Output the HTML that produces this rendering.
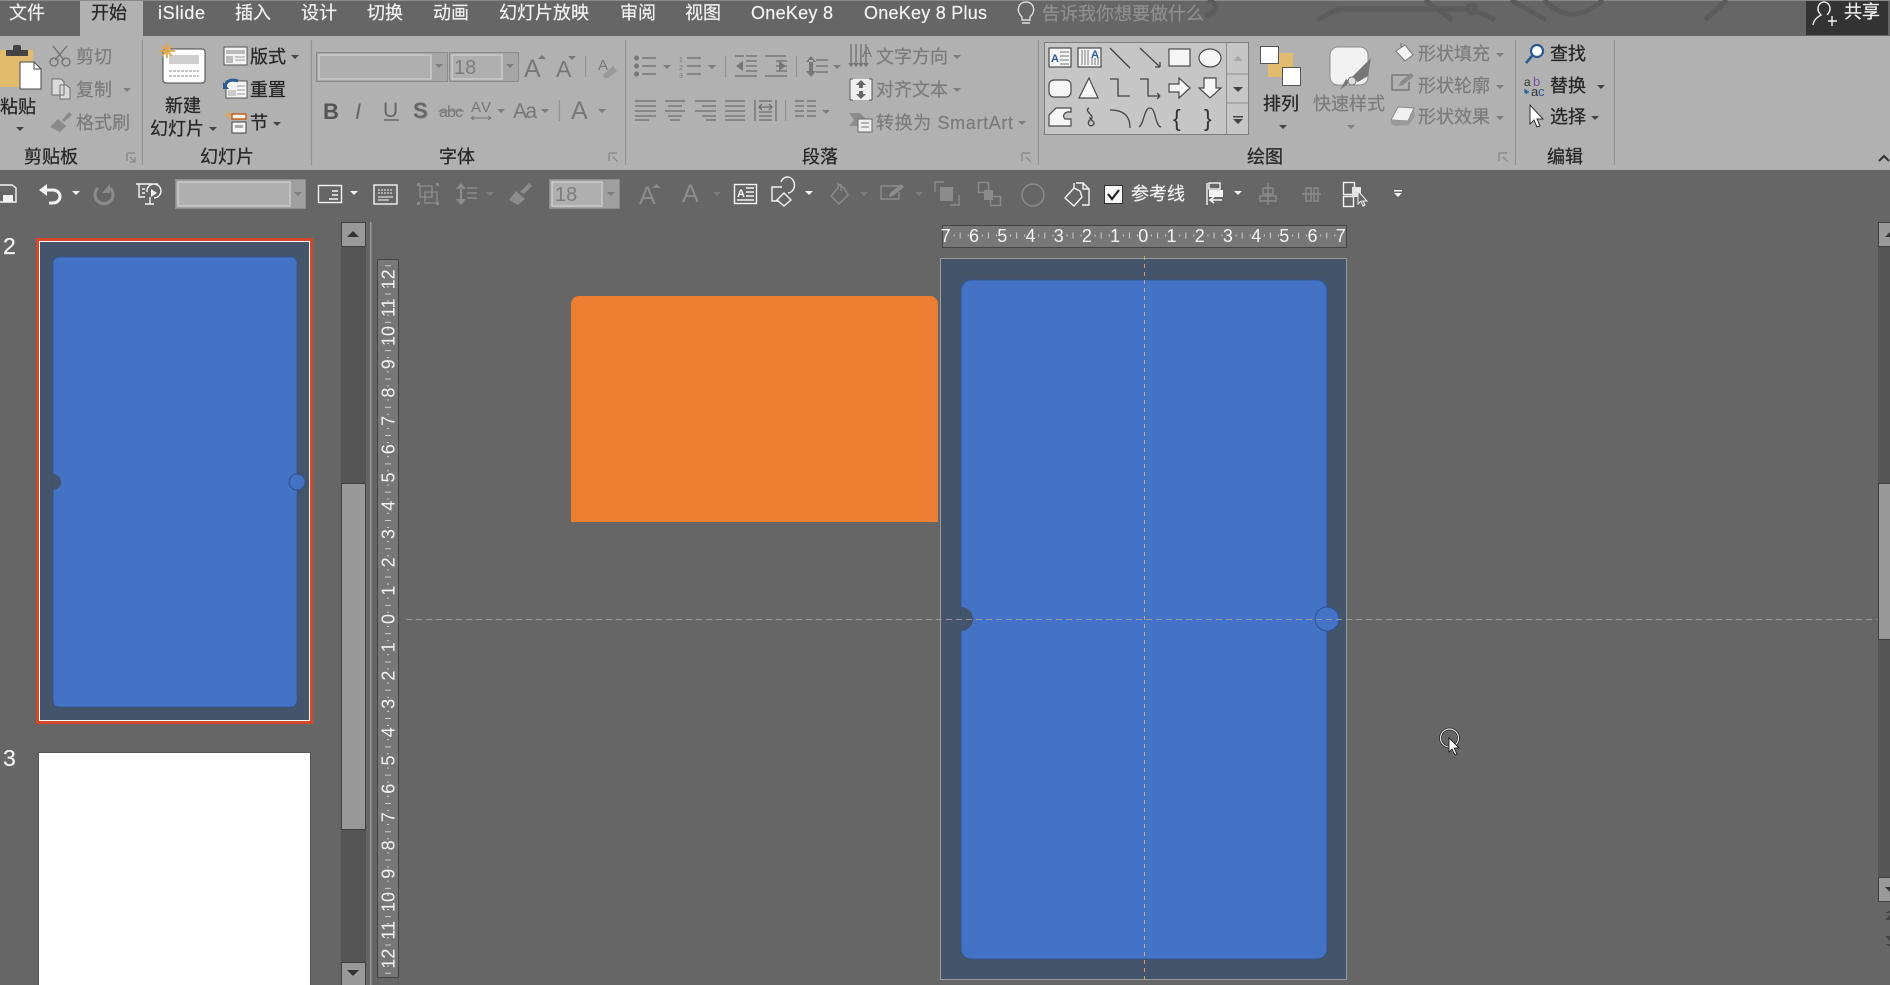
<!DOCTYPE html>
<html lang="zh"><head><meta charset="utf-8"><title>PowerPoint</title>
<style>
html,body{margin:0;padding:0;width:1890px;height:985px;overflow:hidden;background:#666}
svg{display:block}
text{font-family:"Liberation Sans","Noto Sans CJK SC",sans-serif;font-size:18px}
.w{fill:#f2f2f2;stroke:#f2f2f2;stroke-width:.2}.k{fill:#262626;stroke:#262626;stroke-width:.25}.g{fill:#7b7b7b;stroke:#7b7b7b;stroke-width:.2}
.rn{font-size:19px;fill:#f4f4f4;text-anchor:middle}
.ln{fill:none;stroke:#6e6e6e;stroke-width:1.3}
.lk{fill:none;stroke:#444;stroke-width:1.3}
.lw{fill:none;stroke:#f4f4f4;stroke-width:1.4}
.lg{fill:none;stroke:#8c8c8c;stroke-width:1.4}
.sh{fill:#f6f6f6;stroke:#4a4a4a;stroke-width:1.2}
</style></head><body>
<svg width="1890" height="985" viewBox="0 0 1890 985" xmlns="http://www.w3.org/2000/svg">
<rect width="1890" height="985" fill="#666"/>
<rect width="1890" height="1" fill="#8a8a8a"/>
<!-- title decoration -->
<g fill="none" stroke="#5c5c5c" stroke-width="5">
<path d="M1317 20L1338 9H1470M1425 0L1452 20M1472 9L1495 20M1511 0L1546 20M1544 0Q1572 28 1603 0M1727 0L1705 20M1208 0Q1226 8 1205 16"/>
<circle cx="1472" cy="9" r="4"/>
</g>
<!-- ribbon -->
<rect x="0" y="36" width="1890" height="134" fill="#b1b1b1"/>
<rect x="80" y="1" width="63" height="36" fill="#b1b1b1"/>
<rect x="1806" y="1" width="82" height="34" fill="#333"/>
<!-- tabs -->
<g class="w">
<text x="9" y="19">文件</text>
<text x="91" y="19" class="k">开始</text>
<text x="158" y="19" textLength="47">iSlide</text>
<text x="235" y="19">插入</text><text x="301" y="19">设计</text><text x="367" y="19">切换</text><text x="433" y="19">动画</text>
<text x="499" y="19">幻灯片放映</text><text x="620" y="19">审阅</text><text x="685" y="19">视图</text>
<text x="751" y="19" textLength="82">OneKey 8</text><text x="864" y="19" textLength="123">OneKey 8 Plus</text>
<text x="1042" y="20" style="fill:#8f8f8f;stroke:#8f8f8f">告诉我你想要做什么</text>
<text x="1844" y="18">共享</text>
</g>
<path class="lw" d="M1022 17c-7-7-3-15 4-15s11 8 4 15v3h-8zM1022 23h8" style="stroke:#ddd"/>
<path class="lw" d="M1813 25c1-6 5-8 8-10c-6-6-2-13 3-13s9 7 3 13M1828 21h9M1832 16v10" />
<!-- separators -->
<g stroke="#939393" stroke-width="1.2">
<path d="M142.5 40V165M311.5 40V165M625.5 40V165M1038.5 40V165M1515.5 40V165M1614.5 40V165"/>
<path d="M585.5 56V77M559.5 100V121M725.5 56V77M796.5 56V77M785.5 100V121"/>
</g>
<!-- labels -->
<g class="k">
<text x="24" y="163">剪贴板</text><text x="200" y="163">幻灯片</text><text x="439" y="163">字体</text><text x="802" y="163">段落</text><text x="1247" y="163">绘图</text><text x="1547" y="163">编辑</text>
</g>
<g class="lg" stroke-width="1"><path d="M127 153h8M127 153v8M135 162l-5-5M135 157v5h-5M609 153h8M609 153v8M618 162l-5-5M1022 153h8M1022 153v8M1031 162l-5-5M1499 153h8M1499 153v8M1508 162l-5-5"/></g>
<!-- paste -->
<rect x="0" y="50" width="33" height="37" fill="#e2bb6e"/>
<rect x="6" y="50" width="22" height="6" fill="#444"/><rect x="13" y="45" width="8" height="7" rx="2" fill="#444"/>
<path d="M20 62h14l7 7v20H20z" fill="#fff" stroke="#4a4a4a"/><path d="M34 62v7h7" fill="none" stroke="#4a4a4a"/>
<text x="0" y="113" class="k">粘贴</text>
<path d="M16 127h8l-4 4z" fill="#444"/>
<!-- scissors etc -->
<path class="ln" d="M53 46l11 14M67 46l-12 14" stroke-width="2"/><circle class="ln" cx="54" cy="62" r="4"/><circle class="ln" cx="66" cy="62" r="4"/>
<text x="76" y="63" class="g">剪切</text>
<path d="M52 79h9l3 3v13H52z M60 85h6l4 3v11H60z" fill="#dadada" stroke="#6e6e6e"/>
<text x="76" y="96" class="g">复制</text><path d="M123 88h8l-4 4z" fill="#808080"/>
<path d="M62 120l7-8 3 3-8 7zM58 119l8 7-6 6-10-5z" fill="#8a8a8a"/>
<text x="76" y="129" class="g">格式刷</text>
<!-- new slide -->
<rect x="163" y="49" width="42" height="34" rx="3" fill="#fff" stroke="#444"/>
<rect x="169" y="55" width="30" height="9" fill="#cfcfcf"/>
<path d="M169 71h30M169 76h30" stroke="#888" stroke-dasharray="3 1"/>
<path d="M167 43v15M159 51h16M162 46l10 10M172 46l-10 10" stroke="#e0a84a" stroke-width="1.8"/>
<text x="165" y="112" class="k">新建</text><text x="150" y="135" class="k">幻灯片</text><path d="M209 127h8l-4 4z" fill="#444"/>
<rect x="224" y="47" width="23" height="18" fill="#f4f4f4" stroke="#555"/><path d="M226 50h19v4h-19zM226 56h7v7h-7z" fill="#bbb"/><path d="M235 57h10M235 60h10" stroke="#999"/>
<text x="250" y="63" class="k">版式</text><path d="M291 55h8l-4 4z" fill="#444"/>
<rect x="226" y="81" width="21" height="17" fill="#f4f4f4" stroke="#555"/><path d="M228 90h8v6h-8z" fill="#ccc"/><path d="M237 86h8M237 90h8M237 94h8" stroke="#999"/>
<path d="M225 87c1-7 7-8 13-6" fill="none" stroke="#2a5a92" stroke-width="3"/><path d="M223 82v7h6z" fill="#2a5a92"/>
<text x="250" y="96" class="k">重置</text>
<path d="M229 111v8M225 115h8" stroke="#e0a84a" stroke-width="1.4"/>
<rect x="232" y="114" width="14" height="5" fill="#f4f4f4" stroke="#c55a11" stroke-width="1.4"/>
<rect x="232" y="122" width="14" height="11" fill="#f4f4f4" stroke="#444"/><path d="M235 125h8v3h-8z" fill="#aaa"/>
<text x="250" y="129" class="k">节</text><path d="M273 122h8l-4 4z" fill="#444"/>
<!-- font boxes -->
<rect x="316.5" y="52.5" width="131" height="29" fill="#a6a6a6" stroke="#8c8c8c"/>
<rect x="319" y="55" width="112" height="24" fill="#afafaf" stroke="#cdcdcd" stroke-width="1.4"/>
<path d="M435 64h8l-4 4z" fill="#7d7d7d"/>
<rect x="449.5" y="52.5" width="69" height="29" fill="#a6a6a6" stroke="#8c8c8c"/>
<rect x="452" y="55" width="50" height="24" fill="#afafaf" stroke="#cdcdcd" stroke-width="1.4"/>
<text x="454" y="74" style="font-size:20px;fill:#7d7d7d">18</text><path d="M506 64h8l-4 4z" fill="#7d7d7d"/>
<g style="fill:#777">
<text x="524" y="77" style="font-size:25px">A</text><path d="M538 59h8l-4-4z"/>
<text x="556" y="77" style="font-size:23px">A</text><path d="M568 56h8l-4 4z"/>
<text x="598" y="70" style="font-size:15px">A</text><path d="M602 76l11-10 4 5-9 7-3 0z" fill="#999"/>
<text x="323" y="119" style="font-size:22px;font-weight:bold;fill:#555">B</text>
<text x="355" y="119" style="font-size:22px;font-style:italic;fill:#666">I</text>
<text x="383" y="117" style="font-size:21px;fill:#666">U</text><path d="M384 120h15" stroke="#666" stroke-width="1.5"/>
<text x="414" y="119" style="font-size:22px;font-weight:bold;fill:#999">S</text>
<text x="413" y="118" style="font-size:22px;font-weight:bold;fill:#666">S</text>
<text x="439" y="117" style="font-size:16px" textLength="24">abc</text><path d="M438 111h26" stroke="#777"/>
<text x="471" y="112" style="font-size:15px" textLength="20">AV</text><path d="M471 118h20M471 118l3-2M471 118l3 2M491 118l-3-2M491 118l-3 2" stroke="#777"/>
<text x="513" y="118" style="font-size:21px" textLength="24">Aa</text>
<text x="571" y="119" style="font-size:25px">A</text>
</g>
<path d="M497 109h8l-4 4zM541 109h8l-4 4zM598 109h8l-4 4z" fill="#7d7d7d"/>
<!-- paragraph icons -->
<g class="ln">
<path d="M642 58h14M642 66h14M642 74h14M687 58h14M687 66h14M687 74h14"/>
<path d="M746 56h11M746 61h11M746 66h11M746 71h11M735 76h22M735 56h9M765 56h21M776 61h11M776 66h11M776 71h11M765 76h22"/>
<path d="M816 60h12M816 66h12M816 72h12"/>
<path d="M635 101h21M635 106h21M635 111h21M635 116h21M635 120h14"/>
<path d="M665 101h20M668 106h14M665 111h20M668 116h14M670 120h10"/>
<path d="M695 101h21M702 106h14M695 111h21M702 116h14M706 120h10"/>
<path d="M725 101h20M725 106h20M725 111h20M725 116h20M725 120h20"/>
<path d="M755 100v21M776 100v21M759 101h13M759 112h13M759 116h13M759 120h13M759 107h13M762 104l-3 3 3 3M769 104l3 3-3 3"/>
<path d="M795 101h9M807 101h9M795 106h9M807 106h9M795 111h9M807 111h9M795 116h9M807 116h9"/>
</g>
<path d="M634 58m0 0a2.5 2.5 0 1 0 5 0a2.5 2.5 0 1 0-5 0M634 66a2.5 2.5 0 1 0 5 0a2.5 2.5 0 1 0-5 0M634 74a2.5 2.5 0 1 0 5 0a2.5 2.5 0 1 0-5 0" fill="#777"/>
<g style="fill:#777"><text x="679" y="62" style="font-size:7px">1</text><text x="679" y="70" style="font-size:7px">2</text><text x="679" y="78" style="font-size:7px">3</text></g>
<path d="M736 66l7-5v10zM786 66l-7-5v10zM811 56l-5 6h10zM811 77l-5-6h10zM809 60h4v12h-4z" fill="#777" transform="translate(0 0)"/>
<path d="M663 65h8l-4 4zM708 65h8l-4 4zM833 65h8l-4 4zM822 110h8l-4 4z" fill="#7d7d7d"/>
<!-- text direction -->
<path class="ln" d="M851 44v22M856 44v22M861 44v22M866 44v22M849 63l2 3 2-3M854 63l2 3 2-3M859 63l2 3 2-3M864 63l2 3 2-3"/>
<text x="862" y="57" style="font-size:15px;fill:#777">A</text>
<text x="876" y="63" class="g">文字方向</text><path d="M953 55h8l-4 4z" fill="#7d7d7d"/>
<rect x="850" y="79" width="22" height="21" fill="#eee"/><path d="M850 79h3M869 79h3M850 100h3M869 100h3M850 79v21M872 79v21" stroke="#555" fill="none"/>
<path d="M861 80l-5 5h3v3h4v-3h3zM861 99l-5-5h3v-3h4v3h3z" fill="#666"/>
<text x="876" y="96" class="g">对齐文本</text><path d="M953 88h8l-4 4z" fill="#7d7d7d"/>
<path d="M849 113h11l7 7-5 6h-13l5-6z" fill="#8c8c8c"/><rect x="858" y="119" width="14" height="13" fill="#eee" stroke="#666"/><path d="M861 123h8M861 127h8" stroke="#777"/>
<text x="876" y="129" class="g" textLength="137">转换为 SmartArt</text><path d="M1018 121h8l-4 4z" fill="#7d7d7d"/>
<!-- gallery -->
<rect x="1044.5" y="42.5" width="204" height="92" fill="#c6c6c6" stroke="#7e7e7e"/>
<path d="M1226.5 42v92M1227 74h21M1227 103h21" stroke="#8c8c8c"/>
<path d="M1233 61h10l-5-5z" fill="#a8a8a8"/><path d="M1233 87h10l-5 5z" fill="#444"/><path d="M1233 116h10v1.5h-10zM1233 119h10l-5 5z" fill="#444"/>
<rect class="sh" x="1049" y="48" width="22" height="19"/><text x="1051" y="62" style="font-size:11px;font-weight:bold;fill:#2a5a92">A</text><path d="M1060 52h9M1060 56h9M1060 60h9M1060 64h9" stroke="#777"/>
<rect class="sh" x="1078" y="48" width="23" height="19"/><path d="M1082 50v15M1085 50v15M1088 50v15M1092 58v7M1095 58v7M1098 58v7" stroke="#777"/><text x="1091" y="58" style="font-size:11px;font-weight:bold;fill:#2a5a92">A</text>
<path class="lk" d="M1110 48l20 20M1140 48l20 19M1160 67v-5M1160 67h-5"/>
<rect class="sh" x="1169" y="49" width="21" height="17"/><ellipse class="sh" cx="1210" cy="58" rx="11" ry="9"/>
<rect class="sh" x="1049" y="80" width="22" height="17" rx="5"/>
<path class="sh" d="M1089 78l9 20h-19z"/>
<path class="lk" d="M1110 79h8v17h12M1140 79h8v17h12M1160 96l-3-3M1160 96l-3 3"/>
<path class="sh" d="M1169 84h10v-6l11 10-11 10v-6h-10z"/>
<path class="sh" d="M1204 78h12v10h5l-11 10-11-10h5z"/>
<path class="sh" d="M1056 108h15v4c-7-1-9 4-6 7h6v7h-22v-11z"/>
<path class="lk" d="M1089 108c-6 3 7 8 2 11c-5 3-2 9 2 6c4-3-4-5-3-8M1110 110c14 0 20 6 20 18M1139 127c5-3 5-19 11-19c6 0 5 18 11 19"/>
<text x="1173" y="126" style="font-size:23px;fill:#333">{</text><text x="1204" y="126" style="font-size:23px;fill:#333">}</text>
<!-- arrange -->
<rect x="1268" y="53" width="25" height="24" fill="#e2bb6e"/>
<rect x="1260.5" y="46.5" width="18" height="17" fill="#fff" stroke="#555"/><rect x="1282.5" y="67.5" width="18" height="18" fill="#fff" stroke="#555"/>
<text x="1263" y="110" class="k">排列</text><path d="M1279 125h8l-4 4z" fill="#444"/>
<rect x="1330" y="47" width="38" height="38" rx="8" fill="#f2f2f2" stroke="#8c8c8c"/>
<path d="M1340 90l6-11 4 3zM1351 78l20-20-3 18-10 6z" fill="#777"/><circle cx="1352" cy="81" r="4" fill="#ddd" stroke="#777"/>
<text x="1313" y="110" class="g">快速样式</text><path d="M1347 125h8l-4 4z" fill="#808080"/>
<path d="M1396 51l9-6 8 10-8 6z" fill="#f4f4f4" stroke="#777"/><path d="M1401 48v-5" stroke="#777"/>
<text x="1418" y="60" class="g">形状填充</text><path d="M1496 53h8l-4 4z" fill="#7d7d7d"/>
<path class="ln" d="M1409 75h-17v15h17v-8"/><path d="M1399 86l1-4 11-9 3 3-11 9z" fill="#8a8a8a"/>
<text x="1418" y="92" class="g">形状轮廓</text><path d="M1496 85h8l-4 4z" fill="#7d7d7d"/>
<path d="M1391 120l7-13 16 1-6 13z" fill="#f0f0f0" stroke="#888"/><path d="M1391 120l17 1 1 4-15 1-3-2zM1408 121l6-13 1 8-6 9z" fill="#9a9a9a"/>
<text x="1418" y="123" class="g">形状效果</text><path d="M1496 116h8l-4 4z" fill="#7d7d7d"/>
<!-- find -->
<circle cx="1537" cy="51" r="6" fill="#fff" stroke="#2a5a92" stroke-width="2.2"/><path d="M1532 56l-6 7" stroke="#2a5a92" stroke-width="2.6"/>
<text x="1550" y="60" class="k">查找</text>
<text x="1524" y="86" style="font-size:12px;fill:#333">a</text><text x="1533" y="86" style="font-size:13px;fill:#7a4d9e">b</text><text x="1531" y="96" style="font-size:13px;fill:#333">a</text><text x="1538" y="96" style="font-size:13px;fill:#2a5a92">c</text><path d="M1525 89v3h4M1527 90l-2 2 2 2" fill="none" stroke="#2a5a92" stroke-width="1.2"/>
<text x="1550" y="92" class="k">替换</text><path d="M1597 85h8l-4 4z" fill="#444"/>
<path d="M1530 105v19l4-4 3 7 3-1-3-7h6z" fill="#fff" stroke="#333"/>
<text x="1550" y="123" class="k">选择</text><path d="M1591 116h8l-4 4z" fill="#444"/>
<path d="M1879 161l5-5 5 5" fill="none" stroke="#333" stroke-width="2"/>
<!-- toolbar -->
<path class="lw" d="M0 185h12l4 3v14H0" stroke-width="1.6"/><path d="M3 195h10v7H3z" fill="#f4f4f4"/>
<path d="M45 190h8a7 6.500 0 0 1 0 13h-4" fill="none" stroke="#f4f4f4" stroke-width="3"/><path d="M47 184l-8 6 8 6z" fill="#f4f4f4"/>
<path d="M72 191h8l-4 4z" fill="#f4f4f4"/>
<path d="M98 188a9 9 0 1 0 12 0" fill="none" stroke="#8c8c8c" stroke-width="3"/><path d="M110 184v9h-8z" fill="#8c8c8c"/>
<path class="lw" d="M136 184h22M139 184v13h6M147 192a7 7 0 1 1 7 6M145 204h9M150 197v7M145 189h-3M145 193h-3"/><path d="M151 189l6 4-6 4z" fill="#f4f4f4"/>
<rect x="175.5" y="179.5" width="130" height="29" fill="#a0a0a0" stroke="#8c8c8c"/>
<rect x="178" y="182" width="112" height="24" fill="#afafaf" stroke="#cdcdcd" stroke-width="1.4"/>
<path d="M294 192h8l-4 4z" fill="#7d7d7d"/>
<rect class="lw" x="318.5" y="185.5" width="23" height="17"/><path class="lw" d="M332 191h6M332 195h6M329 199h9"/>
<path d="M350 191h8l-4 4z" fill="#f4f4f4"/>
<rect class="lw" x="374" y="185" width="23" height="19"/><path d="M378 190h15M378 193h15" stroke="#f4f4f4" stroke-dasharray="2 1"/><path d="M378 197h15M378 200h11" stroke="#f4f4f4"/>
<rect class="lg" x="420" y="186" width="12" height="11"/><rect class="lg" x="425" y="192" width="12" height="11"/><path d="M417 183h3v3h-3zM436 183h3v3h-3zM417 202h3v3h-3zM436 202h3v3h-3z" fill="#8c8c8c"/>
<path class="lg" d="M467 188h10M467 193h10M467 198h10"/><path d="M461 183l-5 6h10zM461 205l-5-6h10zM460 188h2v12h-2z" fill="#8c8c8c"/>
<path d="M486 192h8l-4 4z" fill="#7d7d7d"/>
<path d="M520 192l9-9 3 3-8 8zM516 191l9 8-7 6-9-5z" fill="#8c8c8c"/>
<rect x="549.5" y="179.5" width="70" height="29" fill="#a0a0a0" stroke="#8c8c8c"/>
<rect x="552" y="182" width="50" height="24" fill="#afafaf" stroke="#cdcdcd" stroke-width="1.4"/>
<text x="555" y="201" style="font-size:20px;fill:#7d7d7d">18</text><path d="M607 192h8l-4 4z" fill="#7d7d7d"/>
<text x="639" y="204" style="font-size:25px;fill:#8c8c8c">A</text><path d="M652 188h9l-4.500-4z" fill="#8c8c8c"/>
<text x="682" y="202" style="font-size:25px;fill:#8c8c8c">A</text><path d="M713 192h8l-4 4z" fill="#7d7d7d"/>
<rect class="lw" x="734.500" y="184.500" width="22" height="19"/><text x="737" y="197" style="font-size:11px;font-weight:bold;fill:#f4f4f4">A</text><path class="lw" d="M746 188h8M746 192h8M746 196h8M737 200h17"/>
<path class="lw" d="M782 187h-10v14h7M781 182a7 8 0 1 1 7 11M784 193l7 7-7 6-7-6z"/><path d="M805 191h8l-4 4z" fill="#f4f4f4"/>
<path class="lg" d="M838 184v4l-7 8 8 8 9-9-4-7zM841 184v7"/><path d="M860 192h8l-4 4z" fill="#7d7d7d"/>
<path class="lg" d="M899 186h-18v13h18v-7"/><path d="M889 197l1-4 11-9 3 3-11 9z" fill="#8c8c8c"/><path d="M915 192h8l-4 4z" fill="#7d7d7d"/>
<path class="lg" d="M944 182h-9v10M950 205h9v-10"/><rect x="940" y="187" width="13" height="14" fill="#8c8c8c"/>
<rect class="lg" x="978.500" y="182.500" width="10" height="10"/><rect x="984" y="190" width="9" height="10" fill="#8c8c8c"/><rect class="lg" x="990.500" y="196.500" width="10" height="9"/>
<ellipse class="lg" cx="1033" cy="195" rx="11" ry="11"/>
<path class="lw" d="M1076 183h7l6 6v16h-7M1074 188l-9 10 9 8 8-9-2-6zM1083 183v6h6M1074 188v-5"/>
<rect x="1104.500" y="185.500" width="18" height="18" fill="#f8f8f8" stroke="#333"/>
<path d="M1108 194l4 5 7-9" fill="none" stroke="#222" stroke-width="2.2"/>
<text x="1131" y="200" class="w">参考线</text>
<path class="lw" d="M1207 183v22"/><rect class="lw" x="1209" y="183" width="11" height="6"/><rect x="1209" y="190" width="14" height="7" fill="#f4f4f4"/><path d="M1222 200h-12M1214 197l-4 3 4 3" fill="none" stroke="#f4f4f4" stroke-width="1.6"/>
<path d="M1234 191h8l-4 4z" fill="#f4f4f4"/>
<path class="lg" d="M1268 183v22M1263 188h10v6h-10zM1260 196h16v5h-16z" stroke-width="1.2"/>
<path class="lg" d="M1302 194h19M1306 188h5v13h-5zM1314 188h4v13h-4z" stroke-width="1.2"/>
<rect class="lw" x="1343.500" y="182.500" width="11" height="12"/><rect class="lw" x="1343.500" y="196.500" width="10" height="10"/>
<rect x="1352" y="187" width="9" height="10" fill="#e4e4e4"/>
<path d="M1358 191v13l3-3 2 5 2-1-2-4h4z" fill="#666" stroke="#f4f4f4"/>
<path d="M1394 190h8v1.500h-8zM1394 193h8l-4 4z" fill="#f4f4f4"/>
<!-- left scrollbar -->
<rect x="341" y="222" width="25" height="763" fill="#555"/>
<rect x="341.500" y="222.500" width="24" height="24" fill="#999" stroke="#404040"/><path d="M347 237h12l-6-6z" fill="#333"/>
<rect x="341.500" y="483.500" width="24" height="346" fill="#999" stroke="#404040"/>
<rect x="341.500" y="962.500" width="24" height="24" fill="#999" stroke="#404040"/><path d="M347 970h12l-6 6z" fill="#333"/>
<rect x="370" y="222" width="1.500" height="763" fill="#999"/>
<!-- slide thumbs -->
<text x="3" y="254" style="font-size:23px" class="w">2</text>
<rect x="37.500" y="239.500" width="274" height="483" fill="none" stroke="#d5482a" stroke-width="3"/>
<rect x="39.500" y="241.500" width="270" height="479" fill="#44546a" stroke="#fff"/>
<rect x="53" y="257" width="244" height="450" rx="6" fill="#4472c4" stroke="#2f528f" stroke-width=".7"/>
<path d="M53 474a8 8 0 0 1 0 16z" fill="#44546a"/>
<circle cx="297" cy="482" r="8" fill="#4472c4" stroke="#2f528f"/>
<text x="3" y="766" style="font-size:23px" class="w">3</text>
<rect x="38.500" y="752.500" width="272" height="240" fill="#fff" stroke="#555"/>
<!-- v ruler -->
<rect x="377.500" y="259.500" width="21" height="718" fill="#777" stroke="#444"/>
<line x1="388" x2="388" y1="265.250" y2="975" stroke="#ccc" stroke-width="6" stroke-dasharray="1 27.300"/>
<line x1="388" x2="388" y1="272.200" y2="973" stroke="#ccc" stroke-width="2" stroke-dasharray="1 13.150"/>
<g class="rn">
<text transform="translate(394.500,619) rotate(-90)">0</text>
<text transform="translate(394.500,590.700) rotate(-90)">1</text><text transform="translate(394.500,562.400) rotate(-90)">2</text><text transform="translate(394.500,534.100) rotate(-90)">3</text><text transform="translate(394.500,505.800) rotate(-90)">4</text><text transform="translate(394.500,477.500) rotate(-90)">5</text><text transform="translate(394.500,449.200) rotate(-90)">6</text><text transform="translate(394.500,420.900) rotate(-90)">7</text><text transform="translate(394.500,392.600) rotate(-90)">8</text><text transform="translate(394.500,364.300) rotate(-90)">9</text><text transform="translate(394.500,336) rotate(-90)">10</text><text transform="translate(394.500,307.700) rotate(-90)">11</text><text transform="translate(394.500,279.400) rotate(-90)">12</text>
<text transform="translate(394.500,647.300) rotate(-90)">1</text><text transform="translate(394.500,675.600) rotate(-90)">2</text><text transform="translate(394.500,703.900) rotate(-90)">3</text><text transform="translate(394.500,732.200) rotate(-90)">4</text><text transform="translate(394.500,760.500) rotate(-90)">5</text><text transform="translate(394.500,788.800) rotate(-90)">6</text><text transform="translate(394.500,817.100) rotate(-90)">7</text><text transform="translate(394.500,845.400) rotate(-90)">8</text><text transform="translate(394.500,873.700) rotate(-90)">9</text><text transform="translate(394.500,902) rotate(-90)">10</text><text transform="translate(394.500,930.300) rotate(-90)">11</text><text transform="translate(394.500,958.600) rotate(-90)">12</text>
</g>
<!-- h ruler -->
<rect x="942.500" y="225.500" width="404" height="22" fill="#777" stroke="#444"/>
<line y1="235.500" y2="235.500" x1="959.700" x2="1340" stroke="#ccc" stroke-width="6" stroke-dasharray="1 27.200"/>
<line y1="235.500" y2="235.500" x1="953.650" x2="1345" stroke="#ccc" stroke-width="2" stroke-dasharray="1 13.100"/>
<g class="rn">
<text x="945.600" y="242">7</text><text x="974" y="242">6</text><text x="1002.300" y="242">5</text><text x="1030.500" y="242">4</text><text x="1058.700" y="242">3</text><text x="1086.900" y="242">2</text><text x="1115.100" y="242">1</text><text x="1143.300" y="242">0</text><text x="1171.500" y="242">1</text><text x="1199.700" y="242">2</text><text x="1227.900" y="242">3</text><text x="1256.100" y="242">4</text><text x="1284.300" y="242">5</text><text x="1312.500" y="242">6</text><text x="1340.700" y="242">7</text>
</g>
<!-- orange -->
<path d="M571 522V304a8 8 0 0 1 8-8H930a8 8 0 0 1 8 8V522z" fill="#ed7d31"/>
<!-- main slide -->
<rect x="940.500" y="258.500" width="406" height="721" fill="#44546a" stroke="#999"/>
<rect x="961" y="280" width="366" height="679" rx="10" fill="#4472c4" stroke="#2f528f" stroke-width=".8"/>
<path d="M961 607a12 12 0 0 1 0 24z" fill="#44546a"/>
<circle cx="1327" cy="619" r="12" fill="#4472c4" stroke="#2f528f"/>
<line x1="406" x2="1877" y1="619.500" y2="619.500" stroke="#a8a8a8" stroke-width=".8" stroke-dasharray="6 4"/>
<line x1="1144.500" x2="1144.500" y1="256" y2="980" stroke="#c8b088" stroke-width=".9" stroke-dasharray="4 4"/>
<!-- right scrollbar -->
<rect x="1878" y="222" width="12" height="680" fill="#555"/>
<rect x="1878.500" y="222.500" width="13" height="24" fill="#999" stroke="#404040"/><path d="M1885 237h6v-6z" fill="#333"/>
<rect x="1878.500" y="483.500" width="13" height="156" fill="#999" stroke="#404040"/>
<rect x="1878.500" y="877.500" width="13" height="24" fill="#999" stroke="#404040"/><path d="M1885 887h6v6z" fill="#333"/>
<path d="M1885 920h6v-6zM1885 913h6v-3zM1885 936h6v6zM1885 944h6v3z" fill="#444"/>
<!-- cursor -->
<circle cx="1449.500" cy="738" r="9" fill="none" stroke="#111" stroke-width="2.500"/>
<circle cx="1449.500" cy="738" r="9" fill="none" stroke="#eee" stroke-width="1.200"/>
<path d="M1449 738v14l3-3 3 6 2-1-3-6h5z" fill="#fff" stroke="#111" stroke-width=".8"/>
</svg>
</body></html>
